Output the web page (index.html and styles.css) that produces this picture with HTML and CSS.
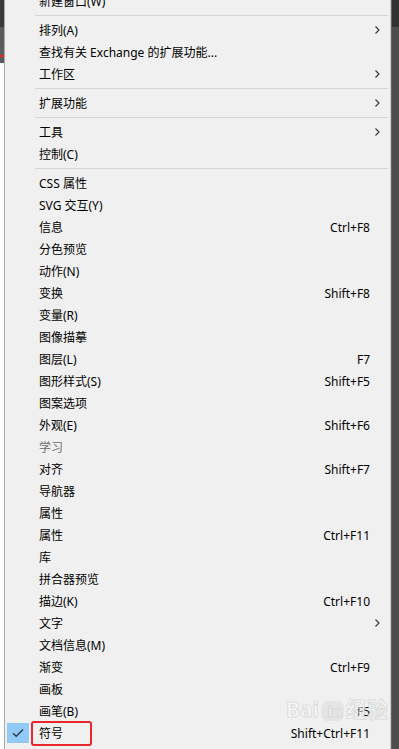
FILE: index.html
```html
<!DOCTYPE html>
<html lang="zh-CN">
<head>
  <meta charset="UTF-8" />
  <title>窗口菜单</title>
  <link rel="stylesheet" href="styles.css">
</head>
<body>
  <div class="screen">
    <div class="app-left"></div>

    <div class="menu">
      <div class="item"><span class="check"></span><span class="label">新建窗口(W)</span></div>
      <div class="sep"></div>
      <div class="item"><span class="check"></span><span class="label">排列(A)</span><span class="arrow"><svg width="5" height="8" viewBox="0 0 5 8"><path d="M0.5 0.5 L4 4 L0.5 7.5" fill="none" stroke="#333" stroke-width="1.1"/></svg></span></div>
      <div class="item"><span class="check"></span><span class="label">查找有关 Exchange 的扩展功能...</span></div>
      <div class="item"><span class="check"></span><span class="label">工作区</span><span class="arrow"><svg width="5" height="8" viewBox="0 0 5 8"><path d="M0.5 0.5 L4 4 L0.5 7.5" fill="none" stroke="#333" stroke-width="1.1"/></svg></span></div>
      <div class="sep"></div>
      <div class="item"><span class="check"></span><span class="label">扩展功能</span><span class="arrow"><svg width="5" height="8" viewBox="0 0 5 8"><path d="M0.5 0.5 L4 4 L0.5 7.5" fill="none" stroke="#333" stroke-width="1.1"/></svg></span></div>
      <div class="sep"></div>
      <div class="item"><span class="check"></span><span class="label">工具</span><span class="arrow"><svg width="5" height="8" viewBox="0 0 5 8"><path d="M0.5 0.5 L4 4 L0.5 7.5" fill="none" stroke="#333" stroke-width="1.1"/></svg></span></div>
      <div class="item"><span class="check"></span><span class="label">控制(C)</span></div>
      <div class="sep"></div>
      <div class="item"><span class="check"></span><span class="label">CSS 属性</span></div>
      <div class="item"><span class="check"></span><span class="label">SVG 交互(Y)</span></div>
      <div class="item"><span class="check"></span><span class="label">信息</span><span class="key">Ctrl+F8</span></div>
      <div class="item"><span class="check"></span><span class="label">分色预览</span></div>
      <div class="item"><span class="check"></span><span class="label">动作(N)</span></div>
      <div class="item"><span class="check"></span><span class="label">变换</span><span class="key">Shift+F8</span></div>
      <div class="item"><span class="check"></span><span class="label">变量(R)</span></div>
      <div class="item"><span class="check"></span><span class="label">图像描摹</span></div>
      <div class="item"><span class="check"></span><span class="label">图层(L)</span><span class="key">F7</span></div>
      <div class="item"><span class="check"></span><span class="label">图形样式(S)</span><span class="key">Shift+F5</span></div>
      <div class="item"><span class="check"></span><span class="label">图案选项</span></div>
      <div class="item"><span class="check"></span><span class="label">外观(E)</span><span class="key">Shift+F6</span></div>
      <div class="item disabled"><span class="check"></span><span class="label">学习</span></div>
      <div class="item"><span class="check"></span><span class="label">对齐</span><span class="key">Shift+F7</span></div>
      <div class="item"><span class="check"></span><span class="label">导航器</span></div>
      <div class="item"><span class="check"></span><span class="label">属性</span></div>
      <div class="item"><span class="check"></span><span class="label">属性</span><span class="key">Ctrl+F11</span></div>
      <div class="item"><span class="check"></span><span class="label">库</span></div>
      <div class="item"><span class="check"></span><span class="label">拼合器预览</span></div>
      <div class="item"><span class="check"></span><span class="label">描边(K)</span><span class="key">Ctrl+F10</span></div>
      <div class="item"><span class="check"></span><span class="label">文字</span><span class="arrow"><svg width="5" height="8" viewBox="0 0 5 8"><path d="M0.5 0.5 L4 4 L0.5 7.5" fill="none" stroke="#333" stroke-width="1.1"/></svg></span></div>
      <div class="item"><span class="check"></span><span class="label">文档信息(M)</span></div>
      <div class="item"><span class="check"></span><span class="label">渐变</span><span class="key">Ctrl+F9</span></div>
      <div class="item"><span class="check"></span><span class="label">画板</span></div>
      <div class="item"><span class="check"></span><span class="label">画笔(B)</span><span class="key">F5</span></div>
      <div class="item checked">
        <span class="check"><svg width="12" height="10" viewBox="0 0 12 10"><path d="M1 5.2 L4.2 8.2 L11 1.5" fill="none" stroke="#2d3b48" stroke-width="1.4"/></svg></span>
        <span class="label">符号</span><span class="key">Shift+Ctrl+F11</span>
        <span class="mark-box"></span>
        <span class="watermark">Bai<span class="paw">du</span>经验</span>
      </div>
    </div>

    <div class="app-right"></div>
  </div>
</body>
</html>
```

FILE: styles.css
```css
* { box-sizing: border-box; }
html, body {
  margin: 0;
  padding: 0;
  overflow: hidden;
}
body {
  font-family: "Noto Sans", "Noto Sans CJK SC", sans-serif;
  font-size: 12px;
  color: #000;
  background: #fff;
}
.screen {
  display: flex;
  width: 399px;
  height: 749px;
  overflow: hidden;
}
.app-left {
  width: 4px;
  flex: none;
  background: linear-gradient(to bottom,
    #3a3a3a 0, #3a3a3a 27px,
    #5c5c5c 27px, #5c5c5c 55px,
    #e8262b 55px, #e8262b 57px,
    #5c5c5c 57px, #5c5c5c 63px,
    #ffffff 63px);
}
.app-right {
  width: 8px;
  flex: none;
  background: linear-gradient(to bottom,
    #323232 0, #323232 27px,
    #4d4d4d 27px);
  border-left: 1px solid #666;
}
.menu {
  width: 387px;
  flex: none;
  margin-top: -10px;
  background: #f0f0f0;
  border-left: 1px solid #a8a8a8;
  border-right: 1px solid #c9c9c9;
}
.item {
  position: relative;
  display: flex;
  align-items: center;
  height: 22px;
  padding-left: 2px;
  white-space: nowrap;
}
.check {
  width: 22px;
  height: 20px;
  flex: none;
  display: flex;
  align-items: center;
  justify-content: center;
}
.checked .check {
  background: #91c9f7;
}
.label {
  flex: 1;
  margin-left: 10px;
}
.key {
  padding-right: 20px;
}
.arrow {
  width: 20px;
  flex: none;
  display: flex;
  align-items: center;
  padding-left: 5px;
  margin-left: auto;
}
.disabled .label {
  color: #6d6d6d;
}
.sep {
  height: 7px;
  padding-top: 3px;
  margin: 0 2px 0 30px;
}
.sep::before {
  content: "";
  display: block;
  height: 1px;
  background: #d5d5d5;
}
.mark-box {
  position: absolute;
  left: 26px;
  top: -1px;
  width: 61px;
  height: 25px;
  border: 2px solid #e8262b;
  border-radius: 3px;
}
.watermark {
  position: absolute;
  left: 281px;
  top: -29px;
  font-size: 21px;
  font-weight: bold;
  color: rgba(255, 255, 255, 0.55);
  -webkit-text-stroke: 1px rgba(190, 190, 190, 0.45);
  pointer-events: none;
}
.paw {
  display: inline-block;
  font-size: 15px;
  padding: 0 2px;
  margin: 0 2px;
  border-radius: 6px;
  background: rgba(210, 210, 210, 0.35);
}
```
